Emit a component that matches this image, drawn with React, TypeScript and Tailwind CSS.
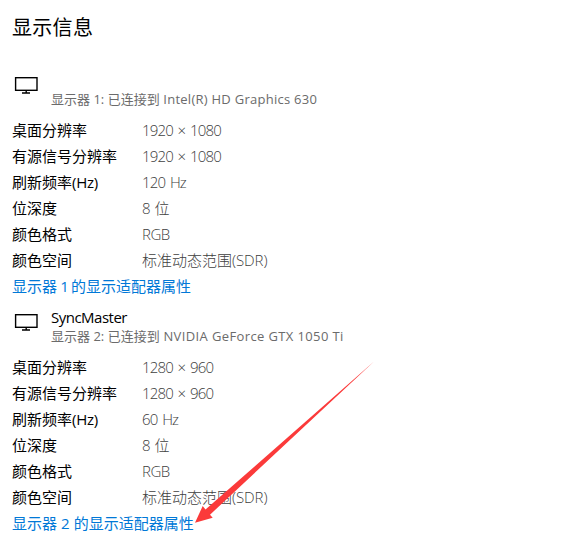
import React from "react";

type Display = {
  name?: string;
  index: number;
  adapter: string;
  adapterTracking: string;
  linkSpacing: string;
  resolution: string;
  refresh: string;
};

const displays: Display[] = [
  {
    index: 1,
    adapter: "Intel(R) HD Graphics 630",
    adapterTracking: "tracking-[0.26px]",
    linkSpacing: "tracking-[-0.8px]",
    resolution: "1920 × 1080",
    refresh: "120 Hz",
  },
  {
    name: "SyncMaster",
    index: 2,
    adapter: "NVIDIA GeForce GTX 1050 Ti",
    adapterTracking: "tracking-[0.38px]",
    linkSpacing: "tracking-[0.1px]",
    resolution: "1280 × 960",
    refresh: "60 Hz",
  },
];

const latin = "font-['Open_Sans','Noto_Sans_CJK_SC',sans-serif]";

function Monitor() {
  return (
    <svg className="block h-[18px] w-6" viewBox="0 0 24 18" fill="none">
      <rect x="1.6" y="1.7" width="21.4" height="12.6" stroke="#000" strokeWidth="1.4" />
      <path d="M12.200 14.500V17M8 17H16" stroke="#000" strokeWidth="1.4" />
    </svg>
  );
}

function Latin({ children }: { children: React.ReactNode }) {
  return <span className={`${latin} tracking-[-0.85px] [word-spacing:1.700px]`}>{children}</span>;
}

function Row({ label, suffix, children }: { label: string; suffix?: string; children: React.ReactNode }) {
  return (
    <div className="flex h-[26px] items-center">
      <dt className="w-[130px] text-black">
        {label}
        {suffix && <span className={`${latin} tracking-[-0.3px]`}>{suffix}</span>}
      </dt>
      <dd className="font-light text-[#404040]">{children}</dd>
    </div>
  );
}

function DisplaySection({ d }: { d: Display }) {
  return (
    <section>
      <header className="flex h-[55px] pt-[9px]">
        <div className="w-[39px] pl-[2px] pt-[4px]">
          <Monitor />
        </div>
        <div>
          {d.name ? (
            <div className={`h-[18px] text-[15px] leading-[16px] tracking-[-0.5px] text-black ${latin}`}>{d.name}</div>
          ) : (
            <div className="h-[18px]" />
          )}
          <div className="h-[18px] text-[13px] leading-[18px] text-[#6b6b6b]">
            显示器<span className={latin}> {d.index}: </span>已连接到
            <span className={`${latin} ${d.adapterTracking}`}> {d.adapter}</span>
          </div>
        </div>
      </header>
      <dl className="-mt-px mb-px">
        <Row label="桌面分辨率"><Latin>{d.resolution}</Latin></Row>
        <Row label="有源信号分辨率"><Latin>{d.resolution}</Latin></Row>
        <Row label="刷新频率" suffix="(Hz)"><Latin>{d.refresh}</Latin></Row>
        <Row label="位深度"><Latin>8 </Latin>位</Row>
        <Row label="颜色格式"><span className={`${latin} tracking-[-0.5px]`}>RGB</span></Row>
        <Row label="颜色空间">标准动态范围<span className={`${latin} tracking-[-0.1px]`}>(SDR)</span></Row>
      </dl>
      <a className="-mt-px mb-px flex h-[26px] items-center whitespace-pre text-[#0078d7]">
        显示器<span className={`${latin} ${d.linkSpacing}`}> {d.index} </span>的显示适配器属性
      </a>
    </section>
  );
}

export default function App() {
  return (
    <main className="relative h-[542px] w-[587px] overflow-hidden whitespace-nowrap bg-white pl-3 font-['Noto_Sans_CJK_SC',sans-serif] text-[15px] leading-[26px] font-normal">
      <h1 className="h-[63px] pt-3 text-[20px] leading-[30px] tracking-[0.3px] text-black">显示信息</h1>
      {displays.map((d) => (
        <DisplaySection key={d.index} d={d} />
      ))}
      <svg className="pointer-events-none absolute left-0 top-0 h-[542px] w-[587px]" viewBox="0 0 587 542">
        <path d="M374 361.500 L205.500 509.500 L202.700 506 L195 522.700 L212.700 517.700 L210 514.700 Z" fill="#fb3a3a" />
      </svg>
    </main>
  );
}
